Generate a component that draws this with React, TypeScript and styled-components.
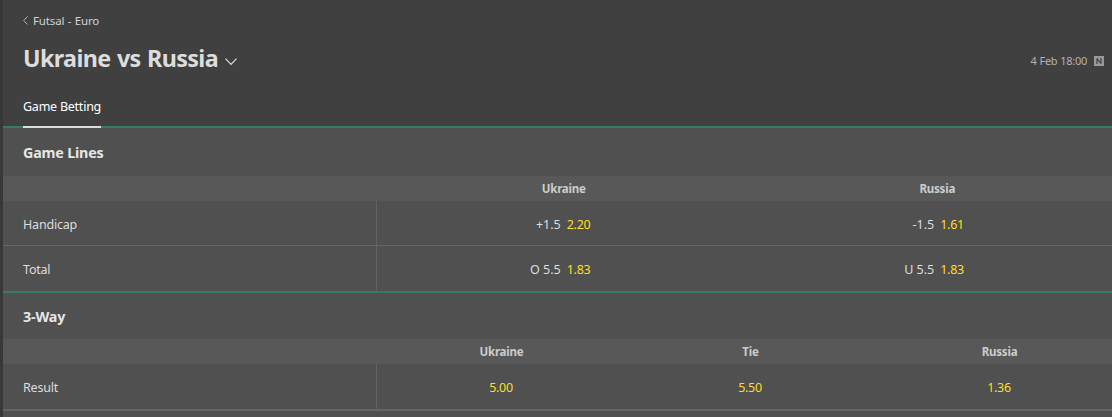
import React from "react";
import styled, { createGlobalStyle } from "styled-components";

const Global = createGlobalStyle`
  *, *::before, *::after { box-sizing: border-box; }
  html, body { height: 100%; }
  body {
    margin: 0;
    overflow: hidden;
    background: #383838;
    font-family: "Noto Sans", "Open Sans", sans-serif;
    font-size: 12.5px;
    color: #dddddd;
  }
  #root { height: 100%; }
`;

const Page = styled.main`
  width: 1121px;
  height: 100%;
  margin-left: 3px;
  background: #505050;
`;

const Header = styled.header`
  display: flex;
  flex-direction: column;
  height: 128px;
  padding: 9px 20px 0 20px;
  background: #404040;
  border-bottom: 2px solid #367c62;
`;

const Breadcrumb = styled.a`
  display: flex;
  align-items: center;
  gap: 5px;
  height: 22px;
  font-size: 11.5px;
  letter-spacing: -0.15px;
  word-spacing: 0.6px;
  color: #d2d2d2;
`;

const TitleBar = styled.div`
  display: flex;
  align-items: center;
  height: 54px;
`;

const Title = styled.h1`
  margin: 0;
  font-size: 23.3px;
  line-height: 54px;
  font-weight: 700;
  letter-spacing: -0.64px;
  word-spacing: 1px;
  color: #dddddd;
`;

const TitleChevron = styled.svg`
  margin: 7px 0 0 7px;
`;

const Kickoff = styled.div`
  display: flex;
  align-items: center;
  gap: 7px;
  margin: 5px 0 0 auto;
  font-size: 11px;
  letter-spacing: -0.3px;
  word-spacing: 0.5px;
  color: #b2b2b2;
`;

const NeutralBadge = styled.svg`
  display: block;
`;

const Tabs = styled.nav`
  display: flex;
  flex: 1;
  margin-bottom: -2px;
`;

const Tab = styled.a`
  padding-top: 12px;
  line-height: 20px;
  letter-spacing: -0.24px;
  color: #ffffff;
  border-bottom: 2px solid #dddddd;
`;

const Market = styled.section<{ $last?: boolean }>`
  border-bottom: 2px solid ${(p) => (p.$last ? "#666666" : "#367c62")};
`;

const MarketTitle = styled.h2<{ $height: number }>`
  margin: 0;
  padding-left: 20px;
  height: ${(p) => p.$height}px;
  line-height: ${(p) => p.$height + 2}px;
  font-size: 14.3px;
  font-weight: 700;
  letter-spacing: -0.18px;
  color: #e6e6e6;
`;

const Columns = styled.div`
  display: flex;
  height: 25px;
  padding-left: 374px;
  background: #585858;
`;

const ColumnName = styled.div`
  flex: 1 1 0;
  text-align: center;
  line-height: 25px;
  font-size: 11.5px;
  font-weight: 700;
  letter-spacing: -0.2px;
  color: #cccccc;
`;

const Row = styled.div`
  display: flex;
  height: 45px;
  line-height: 47px;

  & + & {
    height: 46px;
    margin-top: -1px;
    border-top: 1px solid #666666;
  }
`;

const RowLabel = styled.div`
  width: 374px;
  padding-left: 20px;
  letter-spacing: -0.2px;
  border-right: 1px solid #636363;
`;

const Cell = styled.div`
  display: flex;
  flex: 1 1 0;
  justify-content: center;
`;

const Line = styled.span`
  flex: 1 1 0;
  padding-right: 2px;
  text-align: right;
`;

const Odds = styled.span<{ $split?: boolean }>`
  flex: ${(p) => (p.$split ? "1 1 0" : "none")};
  padding-left: ${(p) => (p.$split ? 4 : 0)}px;
  padding-right: ${(p) => (p.$split ? 0 : 1)}px;
  letter-spacing: -0.3px;
  color: #ffdf1b;
`;

type Price = { line?: string; odds: string };
type MarketData = {
  title: string;
  titleHeight: number;
  columns: string[];
  rows: { label: string; prices: Price[] }[];
};

const markets: MarketData[] = [
  {
    title: "Game Lines",
    titleHeight: 48,
    columns: ["Ukraine", "Russia"],
    rows: [
      { label: "Handicap", prices: [{ line: "+1.5", odds: "2.20" }, { line: "-1.5", odds: "1.61" }] },
      { label: "Total", prices: [{ line: "O 5.5", odds: "1.83" }, { line: "U 5.5", odds: "1.83" }] },
    ],
  },
  {
    title: "3-Way",
    titleHeight: 46,
    columns: ["Ukraine", "Tie", "Russia"],
    rows: [{ label: "Result", prices: [{ odds: "5.00" }, { odds: "5.50" }, { odds: "1.36" }] }],
  },
];

export default function App() {
  return (
    <>
      <Global />
      <Page>
        <Header>
          <Breadcrumb>
            <svg width="5" height="9" viewBox="0 0 5 9" fill="none" stroke="#b4b4b4">
              <path d="M4.5 0.5 L0.7 4.5 L4.5 8.5" />
            </svg>
            Futsal - Euro
          </Breadcrumb>
          <TitleBar>
            <Title>Ukraine vs Russia</Title>
            <TitleChevron width="12" height="8" viewBox="0 0 12 8" fill="none" stroke="#dddddd" strokeWidth="1.2">
              <path d="M0.5 0.7 L6 6.5 L11.5 0.7" />
            </TitleChevron>
            <Kickoff>
              4 Feb 18:00
              <NeutralBadge width="10" height="10" viewBox="0 0 10 10">
                <rect width="10" height="10" fill="#999999" />
                <path d="M3 8 V2.4 L7 7.6 V2" fill="none" stroke="#4a4a4a" strokeWidth="1.3" strokeLinejoin="bevel" />
              </NeutralBadge>
            </Kickoff>
          </TitleBar>
          <Tabs>
            <Tab>Game Betting</Tab>
          </Tabs>
        </Header>
        {markets.map((market, i) => (
          <Market key={market.title} $last={i === markets.length - 1}>
            <MarketTitle $height={market.titleHeight}>{market.title}</MarketTitle>
            <Columns>
              {market.columns.map((name) => (
                <ColumnName key={name}>{name}</ColumnName>
              ))}
            </Columns>
            {market.rows.map((row) => (
              <Row key={row.label}>
                <RowLabel>{row.label}</RowLabel>
                {row.prices.map((price, j) => (
                  <Cell key={j}>
                    {price.line && <Line>{price.line}</Line>}
                    <Odds $split={Boolean(price.line)}>{price.odds}</Odds>
                  </Cell>
                ))}
              </Row>
            ))}
          </Market>
        ))}
      </Page>
    </>
  );
}
